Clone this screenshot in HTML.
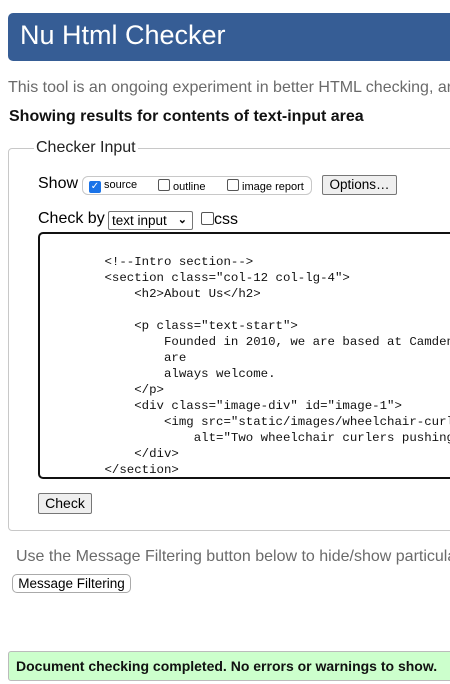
<!DOCTYPE html>
<html><head><meta charset="utf-8"><style>
*{margin:0;padding:0;box-sizing:border-box}
html,body{width:450px;height:684px;overflow:hidden}
body{background:#fff;font-family:"Liberation Sans",Arial,sans-serif;position:relative;color:#000}
#w{position:absolute;left:0;top:0;width:450px;height:684px;overflow:hidden}
.a{position:absolute;white-space:nowrap}
.hdr{left:8px;top:13px;width:460px;height:48px;background:#365d95;border-radius:5px}
.hdr span{position:absolute;left:12px;top:7px;color:#fff;font-size:27px}
.btn{position:absolute;background:#efefef;border:1px solid #767676;border-radius:2px;font-size:13.5px;text-align:center}
pre{position:absolute;font-family:"Liberation Mono",monospace;font-size:12.4px;line-height:16px;white-space:pre;color:#111}
.cb{display:inline-block;width:12px;height:12px;border:1px solid #555;border-radius:2px;vertical-align:-1px;background:#fff}
</style></head><body><div id="w">
<div class="a hdr"><span>Nu Html Checker</span></div>
<div class="a" style="left:8px;top:79px;font-size:16px;color:#6a6a6a">This tool is an ongoing experiment in better HTML checking, and its behavior</div>
<div class="a" style="left:9px;top:108px;font-size:16px;font-weight:bold;color:#111">Showing results for contents of text-input area</div>
<div class="a" style="left:8px;top:148px;width:460px;height:383px;border:1px solid #c8c8c8;border-radius:4px"></div>
<div class="a" style="left:34px;top:139px;font-size:16px;background:#fff;padding:0 2px;color:#222">Checker Input</div>
<div class="a" style="left:38px;top:175px;font-size:16px">Show</div>
<div class="a" style="left:82px;top:176px;width:230px;height:19px;border:1px solid #c8c8c8;border-radius:6px"></div>
<div class="a" style="left:89px;top:179px;font-size:11px"><span class="cb" style="background:#1a73e8;border-color:#1a73e8;color:#fff;font-size:10px;line-height:10px;text-align:center">✓</span> source</div>
<div class="a" style="left:158px;top:179px;font-size:11px"><span class="cb"></span> outline</div>
<div class="a" style="left:227px;top:179px;font-size:11px"><span class="cb"></span> image report</div>
<div class="btn" style="left:322px;top:175px;width:75px;height:20px;line-height:18px">Options…</div>
<div class="a" style="left:38px;top:210px;font-size:16px">Check by</div>
<div class="a" style="left:108px;top:211px;width:85px;height:19px;border:1px solid #767676;border-radius:2px;font-size:13.5px;padding-left:3px;line-height:17px">text input <span style="position:absolute;right:5px;font-size:11px;font-weight:bold">&#8964;</span></div>
<div class="a" style="left:201px;top:212px;font-size:16px;line-height:14px"><span class="cb" style="width:13px;height:13px"></span>css</div>
<div class="a" style="left:38px;top:232px;width:420px;height:247px;border:2px solid #111;border-radius:5px;overflow:hidden">
<pre style="left:5px;top:20px">        &lt;!--Intro section--&gt;
        &lt;section class="col-12 col-lg-4"&gt;
            &lt;h2&gt;About Us&lt;/h2&gt;

            &lt;p class="text-start"&gt;
                Founded in 2010, we are based at Camden
                are
                always welcome.
            &lt;/p&gt;
            &lt;div class="image-div" id="image-1"&gt;
                &lt;img src="static/images/wheelchair-curlers
                    alt="Two wheelchair curlers pushing
            &lt;/div&gt;
        &lt;/section&gt;</pre></div>
<div class="btn" style="left:38px;top:493px;width:54px;height:21px;line-height:19px;font-size:14px">Check</div>
<div class="a" style="left:16px;top:548px;font-size:16px;color:#6a6a6a">Use the Message Filtering button below to hide/show particular messages</div>
<div class="a" style="left:12px;top:574px;width:119px;height:19px;border:1px solid #aaa;border-radius:5px;font-size:13.5px;text-align:center;line-height:17px">Message Filtering</div>
<div class="a" style="left:8px;top:651px;width:460px;height:30px;background:#ccffcc;border:1px solid #bbb;border-radius:3px"></div>
<div class="a" style="left:16px;top:658px;font-size:14px;font-weight:bold;color:#111">Document checking completed. No errors or warnings to show.</div>
</div></body></html>
